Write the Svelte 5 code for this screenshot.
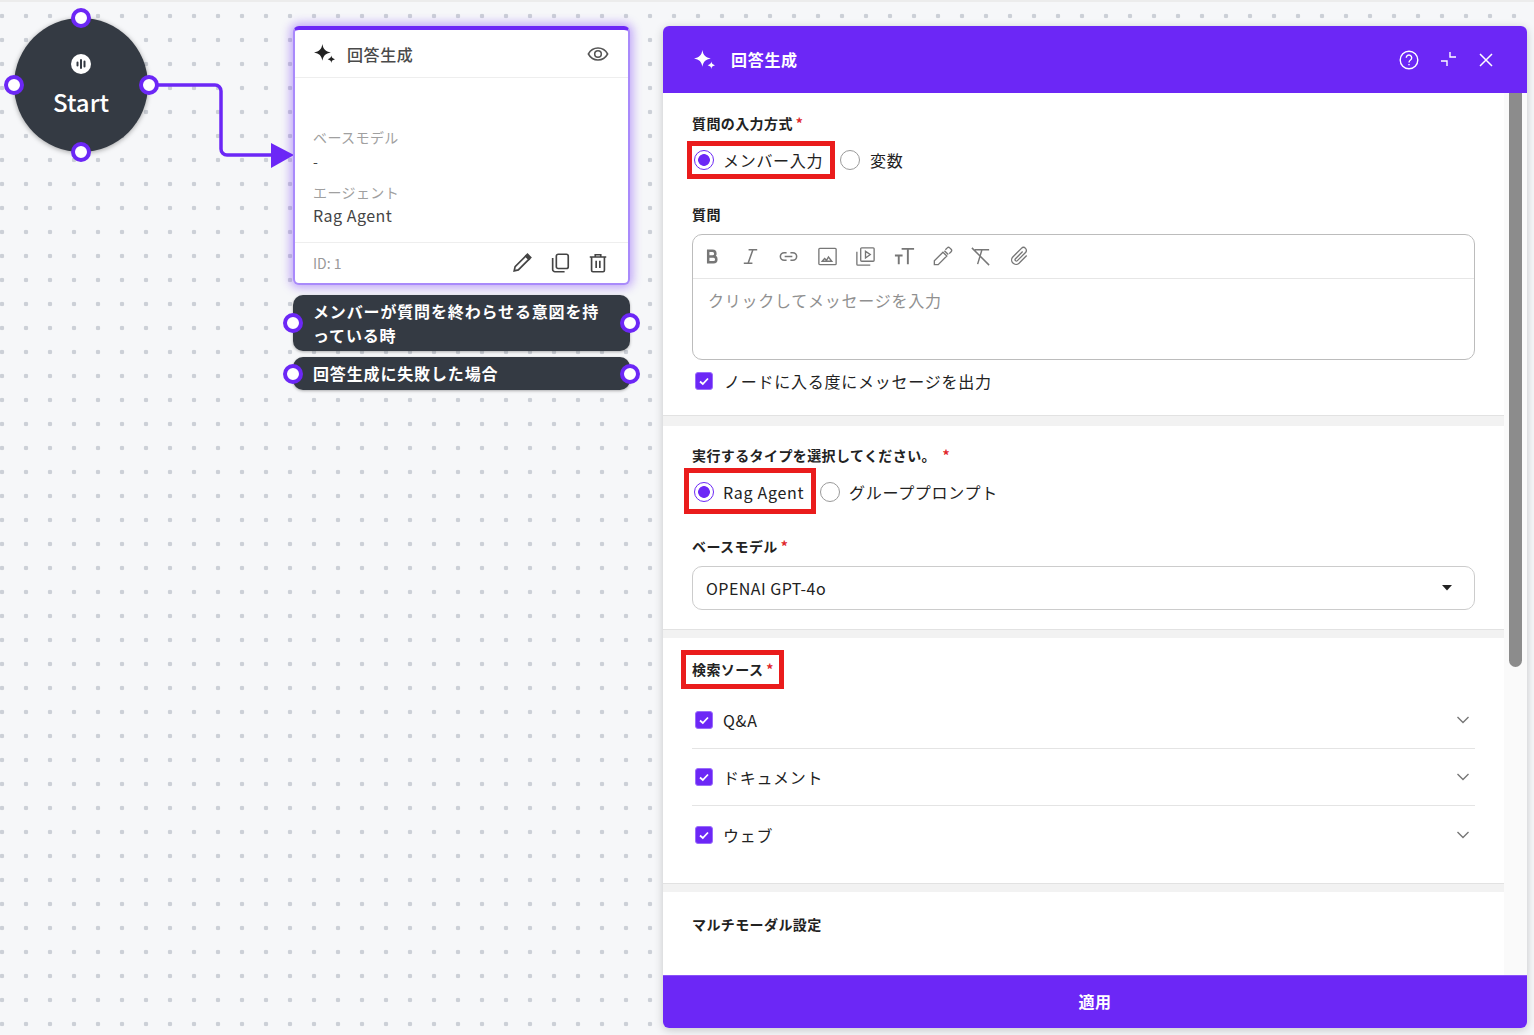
<script>
  // toolbar icons are stroked paths on a 24px grid
  const tools = [
    { name: 'bold', d: 'M7.500 6h4.500a3 3 0 0 1 0 6H7.500zM7.500 12h5.500a3 3 0 0 1 0 6H7.500z', w: 2.6 },
    { name: 'italic', d: 'M10 5h9M5 19h9M14.500 5l-5 14', w: 1.6 },
    { name: 'link', d: 'M10 8H7.500a4 4 0 0 0 0 8H10M14 8h2.500a4 4 0 0 1 0 8H14M8 12h8', w: 1.6 },
    { name: 'image', d: 'M4 3.500h16a1 1 0 0 1 1 1v15a1 1 0 0 1-1 1H4a1 1 0 0 1-1-1v-15a1 1 0 0 1 1-1zM6.500 17l2.500-3 2 2 2-3.500 3.500 4.500z', w: 1.4 },
    { name: 'video', d: 'M8 3h12a1 1 0 0 1 1 1v12a1 1 0 0 1-1 1H8a1 1 0 0 1-1-1V4a1 1 0 0 1 1-1zM3 7v13a1 1 0 0 0 1 1h13M12 6.500v7l5-3.500z', w: 1.4 },
    { name: 'size', d: 'M9 4h13M15.500 4v16M2 11h8M6 11v9', w: 2 },
    { name: 'color', d: 'M14 6l4 4M12.500 7.500l4 4-9 9H3.500v-4zM15 5l2-2a1.800 1.800 0 0 1 2.500 0l1.500 1.500a1.800 1.800 0 0 1 0 2.500l-2 2', w: 1.4 },
    { name: 'clear', d: 'M6 5h15M13.500 5l-4.500 15M3 3l18 18', w: 1.5 },
    { name: 'attach', d: 'M19.500 11l-8 8a4.600 4.600 0 0 1-6.500-6.500l9-9a3 3 0 0 1 4.300 4.300l-8.500 8.500a1.300 1.300 0 0 1-2-2l7.500-7.500', w: 1.4 }
  ]

  const sources = ['Q&A', 'ドキュメント', 'ウェブ']
  const sparkle = 'M8 0C8.800 5 11 7.200 16 8 11 8.800 8.800 11 8 16 7.200 11 5 8.800 0 8 5 7.200 7.200 5 8 0ZM16.500 11C16.800 13 17.500 13.700 20 14.500 17.500 15.300 16.800 16 16.500 18 16.200 16 15.500 15.300 13 14.500 15.500 13.700 16.200 13 16.500 11Z'

  const handles = [
    [81, 18], [14, 85], [149, 85], [81, 152],
    [293, 323], [630, 323], [293, 374], [630, 374]
  ]
</script>

<main class="canvas">
  <svg class="edge" width="300" height="200" viewBox="0 0 300 200">
    <path d="M150 85H215a6 6 0 0 1 6 6v58a6 6 0 0 0 6 6h50" fill="none" stroke="#6c27f6" stroke-width="3.500" />
    <path d="M271 143l23 12-23 13z" fill="#6c27f6" />
  </svg>

  <div class="start">
    <span class="start-icon">
      <svg width="20" height="20" viewBox="0 0 20 20">
        <circle cx="10" cy="10" r="10" fill="#fff" />
        <path d="M6.500 8.500v3M10 6v8M13.500 7.500v5" stroke="#343a43" stroke-width="2" stroke-linecap="round" />
      </svg>
    </span>
    <span class="start-label">Start</span>
  </div>

  <div class="flow">
    <section class="card">
      <header class="card-head">
        <svg width="21" height="19" viewBox="0 0 20 18"><path d={sparkle} fill="#222" /></svg>
        <span class="card-title">回答生成</span>
        <svg class="eye" width="22" height="22" viewBox="0 0 24 24" fill="none" stroke="#555" stroke-width="1.700">
          <path d="M1.500 12C4 7.500 7.700 5.500 12 5.500s8 2 10.500 6.500C20 16.500 16.300 18.500 12 18.500S4 16.500 1.500 12z" />
          <circle cx="12" cy="12" r="3.600" />
        </svg>
      </header>
      <div class="card-body">
        <div class="meta">ベースモデル</div>
        <div class="value dash">-</div>
        <div class="meta second">エージェント</div>
        <div class="value">Rag Agent</div>
      </div>
      <footer class="card-foot">
        <span class="node-id">ID: 1</span>
        <svg width="22" height="22" viewBox="0 0 24 24" fill="none" stroke="#444" stroke-width="1.800">
          <path d="M3.500 20.500l1-4.500L16.500 4l3.500 3.500L8 19.500z" />
          <path d="M16 4.500L18 2.500l3.500 3.500-2 2z" fill="#444" />
        </svg>
        <svg width="22" height="22" viewBox="0 0 24 24" fill="none" stroke="#444" stroke-width="1.800">
          <rect x="8" y="2.500" width="13" height="15.500" rx="2" />
          <path d="M4 6.500V19a2.500 2.500 0 0 0 2.500 2.500H17" />
        </svg>
        <svg width="22" height="22" viewBox="0 0 24 24" fill="none" stroke="#444" stroke-width="1.800">
          <path d="M3 5.500h18M9 5.500V3h6v2.500M5 5.500V20a1.500 1.500 0 0 0 1.500 1.500h11A1.500 1.500 0 0 0 19 20V5.500M10 9.500v8M14 9.500v8" />
        </svg>
      </footer>
    </section>
    <div class="chip tall">メンバーが質問を終わらせる意図を持っている時</div>
    <div class="chip short">回答生成に失敗した場合</div>
  </div>

  {#each handles as [x, y]}
    <span class="handle" style="left: {x}px; top: {y}px"></span>
  {/each}

  <aside class="panel">
    <header class="panel-head">
      <svg width="21" height="19" viewBox="0 0 20 18"><path d={sparkle} fill="#fff" /></svg>
      <span class="panel-title">回答生成</span>
      <span class="panel-actions">
        <svg width="22" height="22" viewBox="0 0 22 22" fill="none" stroke="#fff" stroke-width="1.400">
          <circle cx="11" cy="11" r="8.800" />
          <path d="M8.300 8.800a2.700 2.700 0 1 1 4.200 2.200c-1 .7-1.500 1.200-1.500 2.400M11 15v1.300" />
        </svg>
        <svg width="18" height="18" viewBox="0 0 18 18" fill="none" stroke="#fff" stroke-width="1.400">
          <path d="M10 1v5h6M1 10h6v5" />
        </svg>
        <svg width="16" height="16" viewBox="0 0 16 16" fill="none" stroke="#fff" stroke-width="1.500">
          <path d="M2 2l12 12M14 2L2 14" />
        </svg>
      </span>
    </header>

    <div class="panel-main">
      <div class="form">
        <section class="group first">
          <div class="label">質問の入力方式<em>*</em></div>
          <div class="radios one">
            <label class="mark radio-mark">
              <span class="radio on"></span>
              <span>メンバー入力</span>
            </label>
            <label class="option">
              <span class="radio"></span>
              <span>変数</span>
            </label>
          </div>
          <div class="label question">質問</div>
          <div class="editor">
            <div class="toolbar">
              {#each tools as tool}
                <span class="tool" title={tool.name}>
                  <svg width="23" height="23" viewBox="0 0 24 24" fill="none" stroke="#777" stroke-width={tool.w}>
                    <path d={tool.d} />
                  </svg>
                </span>
              {/each}
            </div>
            <div class="placeholder">クリックしてメッセージを入力</div>
          </div>
          <label class="check-row">
            <span class="check">
              <svg width="12" height="12" viewBox="0 0 12 12" fill="none" stroke="#fff" stroke-width="1.800"><path d="M2 6.500l2.800 2.500L10 3.500" /></svg>
            </span>
            <span>ノードに入る度にメッセージを出力</span>
          </label>
        </section>

        <section class="group second-group">
          <div class="label">実行するタイプを選択してください。 <em>*</em></div>
          <div class="radios two">
            <label class="mark radio-mark tall-mark">
              <span class="radio on"></span>
              <span>Rag Agent</span>
            </label>
            <label class="option">
              <span class="radio"></span>
              <span>グループプロンプト</span>
            </label>
          </div>
          <div class="label model">ベースモデル<em>*</em></div>
          <div class="select">
            <span>OPENAI GPT-4o</span>
            <svg width="10" height="6" viewBox="0 0 10 6"><path d="M0 0h10L5 5.500z" fill="#222" /></svg>
          </div>
        </section>

        <section class="group third-group">
          <div class="label mark label-mark">検索ソース<em>*</em></div>
          <div class="sources">
            {#each sources as source}
              <div class="source">
                <span class="check">
                  <svg width="12" height="12" viewBox="0 0 12 12" fill="none" stroke="#fff" stroke-width="1.800"><path d="M2 6.500l2.800 2.500L10 3.500" /></svg>
                </span>
                <span class="source-name">{source}</span>
                <svg width="14" height="8" viewBox="0 0 14 8" fill="none" stroke="#777" stroke-width="1.400"><path d="M1.500 1l5.500 5.500L12.500 1" /></svg>
              </div>
            {/each}
          </div>
        </section>

        <section class="group last">
          <div class="label">マルチモーダル設定</div>
        </section>
      </div>
      <div class="track"><div class="thumb"></div></div>
    </div>

    <button class="apply" type="button">適用</button>
  </aside>
</main>

<style>
  :global(body) {
    margin: 0;
    font-family: "Noto Sans CJK JP", "Noto Sans", sans-serif;
    color: #222;
  }

  .canvas {
    position: relative;
    height: 100vh;
    overflow: hidden;
    background-color: #f6f7f9;
    background-image: radial-gradient(circle, #ccd0d7 2px, transparent 2.600px);
    background-size: 24px 24px;
    background-position: -10px 4px;
    box-shadow: inset 0 2px 0 #ececec;
  }

  .edge {
    position: absolute;
    left: 0;
    top: 0;
  }

  .start {
    position: absolute;
    left: 14px;
    top: 18px;
    width: 134px;
    height: 134px;
    box-sizing: border-box;
    padding-top: 36px;
    border-radius: 50%;
    background: #343a43;
    box-shadow: 0 1px 5px rgba(0, 0, 0, 0.35);
    display: flex;
    flex-direction: column;
    align-items: center;
    color: #fff;
  }

  .start-icon {
    display: flex;
    height: 20px;
  }

  .start-label {
    margin-top: 9px;
    font-size: 24px;
    line-height: 38px;
    font-weight: 500;
  }

  .handle {
    position: absolute;
    width: 12px;
    height: 12px;
    margin: -10px 0 0 -10px;
    border: 4px solid #6c27f6;
    border-radius: 50%;
    background: #fff;
  }

  .flow {
    position: absolute;
    left: 293px;
    top: 26px;
    width: 337px;
    display: flex;
    flex-direction: column;
  }

  .card {
    height: 259px;
    box-sizing: border-box;
    display: flex;
    flex-direction: column;
    background: #fff;
    border: 2px solid #a98afb;
    border-top: 4px solid #6c27f6;
    border-radius: 6px;
    box-shadow: 0 0 10px 3px rgba(108, 39, 246, 0.38);
  }

  .card-head {
    height: 47px;
    flex: none;
    display: flex;
    align-items: center;
    padding: 0 19px;
    border-bottom: 1px solid #eeeeee;
  }

  .card-title {
    margin-left: 12px;
    font-size: 16px;
    letter-spacing: 0.6px;
    color: #4a4a4a;
    font-weight: 500;
  }

  .eye {
    margin-left: auto;
  }

  .card-body {
    flex: 1;
    padding: 48px 18px 0;
  }

  .meta {
    font-size: 14px;
    line-height: 22px;
    letter-spacing: 0.4px;
    color: #a0a0a0;
  }

  .meta.second {
    margin-top: 8px;
  }

  .value {
    font-size: 16px;
    line-height: 24px;
    letter-spacing: 0.5px;
    color: #444;
  }

  .value.dash {
    font-size: 14px;
    margin-top: 1px;
  }

  .card-foot {
    height: 40px;
    flex: none;
    display: flex;
    align-items: center;
    gap: 16px;
    padding: 0 19px 0 18px;
    border-top: 1px solid #eeeeee;
  }

  .node-id {
    margin-right: auto;
    font-size: 14px;
    color: #999;
  }

  .chip {
    font-size: 16px;
    line-height: 24px;
    letter-spacing: 0.85px;
    line-break: anywhere;
    font-weight: 700;
    background: #343a43;
    border-radius: 10px;
    color: #fff;
    box-shadow: 0 1px 3px rgba(0, 0, 0, 0.3);
  }

  .chip.tall {
    margin-top: 10px;
    padding: 4px 20px;
  }

  .chip.short {
    margin-top: 6px;
    padding: 4px 20px 5px;
  }

  .panel {
    position: absolute;
    left: 663px;
    top: 26px;
    width: 864px;
    height: 1002px;
    display: flex;
    flex-direction: column;
    background: #fff;
    border-radius: 6px;
    box-shadow: 0 2px 10px rgba(0, 0, 0, 0.2);
    overflow: hidden;
  }

  .panel-head {
    height: 67px;
    flex: none;
    display: flex;
    align-items: center;
    padding: 0 33px 0 31px;
    background: #6c27f6;
    color: #fff;
  }

  .panel-title {
    margin-left: 16px;
    margin-bottom: 2px;
    font-size: 16px;
    letter-spacing: 0.7px;
    font-weight: 700;
  }

  .panel-actions {
    margin-left: auto;
    display: flex;
    align-items: center;
    gap: 20px;
  }

  .panel-main {
    flex: 1;
    min-height: 0;
    display: flex;
  }

  .form {
    flex: 1;
    min-width: 0;
  }

  .track {
    width: 23px;
    flex: none;
    background: #fafafa;
  }

  .thumb {
    width: 13px;
    height: 574px;
    margin-left: 5px;
    background: #8c8c8c;
    border-radius: 0 0 7px 7px;
  }

  .group {
    box-sizing: border-box;
    padding: 0 29px;
    border-bottom: 8px solid #f2f2f2;
    box-shadow: inset 0 -1px 0 #e2e2e2;
  }

  .group.first {
    height: 333px;
    padding-top: 20px;
    border-bottom-width: 10px;
  }

  .second-group {
    height: 212px;
    padding-top: 19px;
  }

  .third-group {
    height: 254px;
    padding-top: 12px;
  }

  .group.last {
    border: 0;
    box-shadow: none;
    padding-top: 22px;
  }

  .label {
    font-size: 14px;
    line-height: 20px;
    letter-spacing: 0.4px;
    font-weight: 700;
    color: #222;
  }

  .label em {
    margin-left: 3px;
    font-style: normal;
    color: #e0262a;
  }

  .radios {
    display: flex;
    align-items: center;
    margin-left: -5px;
    margin-top: 8px;
    font-size: 16px;
    letter-spacing: 0.7px;
  }

  .mark {
    border: 5px solid #ea1c1c;
    box-sizing: border-box;
  }

  .radio-mark {
    width: 148px;
    height: 38px;
    display: flex;
    align-items: center;
    gap: 9px;
    padding-left: 2px;
  }

  .radios.two {
    margin-left: -8px;
    margin-top: 3px;
  }

  .tall-mark {
    width: 132px;
    height: 46px;
    padding: 2px 0 0 5px;
  }

  .option {
    display: flex;
    align-items: center;
    gap: 10px;
    margin-left: 5px;
  }

  .radios.two .option {
    margin-left: 4px;
    padding-top: 2px;
    gap: 9px;
  }

  .radio {
    width: 20px;
    height: 20px;
    box-sizing: border-box;
    flex: none;
    border: 1.500px solid #9a9a9a;
    border-radius: 50%;
  }

  .radio.on {
    border-color: #6c27f6;
    background: radial-gradient(circle, #6c27f6 5.500px, transparent 6.200px);
  }

  .question {
    margin-top: 25px;
  }

  .editor {
    margin-top: 10px;
    height: 126px;
    box-sizing: border-box;
    border: 1px solid #bcbcbc;
    border-radius: 10px;
  }

  .toolbar {
    height: 44px;
    box-sizing: border-box;
    display: flex;
    align-items: center;
    border-bottom: 1px solid #e6e6e6;
  }

  .tool {
    width: 38.400px;
    display: flex;
    justify-content: center;
  }

  .placeholder {
    padding: 9px 15px;
    font-size: 16px;
    line-height: 24px;
    letter-spacing: 0.75px;
    color: #909090;
  }

  .check-row {
    display: flex;
    align-items: center;
    gap: 11px;
    margin: 11px 0 0 3px;
    font-size: 16px;
    line-height: 20px;
    letter-spacing: 0.75px;
  }

  .check {
    width: 18px;
    height: 18px;
    flex: none;
    display: flex;
    align-items: center;
    justify-content: center;
    background: #6c27f6;
    border: 1px solid #9a6cfb;
    box-sizing: border-box;
    border-radius: 3px;
  }

  .model {
    margin-top: 22px;
  }

  .select {
    margin-top: 10px;
    height: 44px;
    box-sizing: border-box;
    display: flex;
    align-items: center;
    justify-content: space-between;
    padding: 0 22px 0 13px;
    border: 1px solid #cccccc;
    border-radius: 10px;
    font-size: 16px;
    letter-spacing: 0.46px;
  }

  .label-mark {
    width: fit-content;
    height: 39px;
    margin-left: -11px;
    padding: 5px 5px 5px 6px;
    line-height: 19px;
  }

  .sources {
    margin-top: 3px;
  }

  .source {
    height: 57px;
    box-sizing: border-box;
    display: flex;
    align-items: center;
    padding: 0 5px 0 3px;
    border-bottom: 1px solid #e4e4e4;
    font-size: 16px;
    letter-spacing: 0.7px;
  }

  .source:last-child {
    border-bottom: 0;
  }

  .source-name {
    margin-left: 10px;
    margin-right: auto;
  }

  .apply {
    height: 53px;
    flex: none;
    border: 0;
    border-top: 1px solid #8a52f8;
    background: #6c27f6;
    color: #fff;
    font: 700 16px "Noto Sans CJK JP", sans-serif;
    letter-spacing: 0.5px;
    padding: 0 0 2px;
  }
</style>
